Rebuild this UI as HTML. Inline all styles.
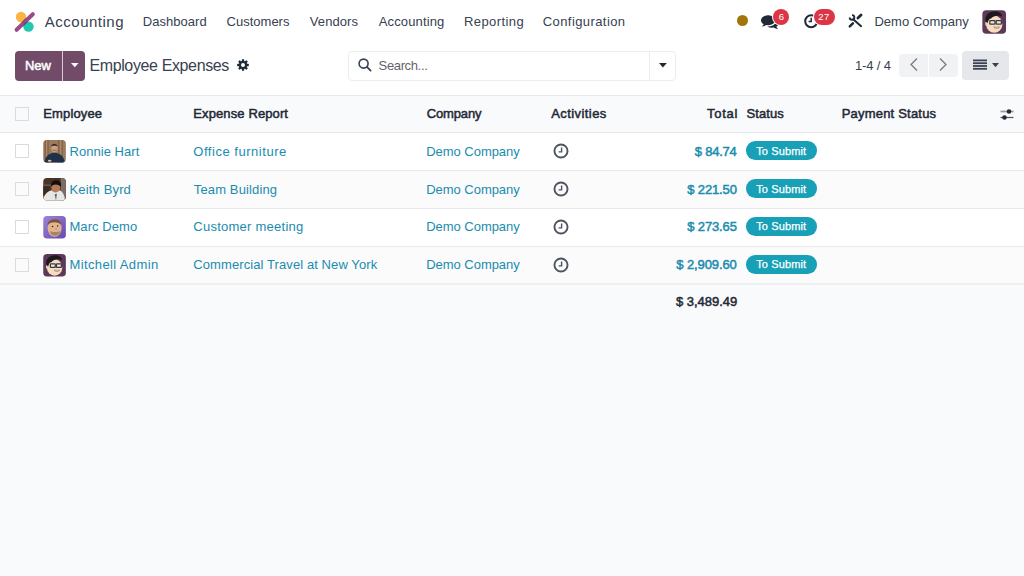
<!DOCTYPE html>
<html><head><meta charset="utf-8">
<style>
*{margin:0;padding:0;box-sizing:border-box}
html,body{width:1024px;height:576px;overflow:hidden;background:#fff;font-family:"Liberation Sans",sans-serif;color:#374151}
.a{position:absolute}
.t{position:absolute;white-space:nowrap}
svg{position:absolute;overflow:visible}
</style></head><body>
<svg style="left:14px;top:10px" width="22" height="22" viewBox="0 0 22 22">
  <circle cx="7" cy="7" r="5.2" fill="#fbb445"/>
  <circle cx="14.5" cy="16.6" r="5.2" fill="#21c8b0"/>
  <defs><clipPath id="lgo"><circle cx="7" cy="7" r="5.2"/></clipPath><clipPath id="lgt"><circle cx="14.5" cy="16.6" r="5.2"/></clipPath></defs>
  <line x1="2.6" y1="19.8" x2="18.8" y2="4.2" stroke="#9b4a86" stroke-width="4" stroke-linecap="round"/>
  <line x1="2.6" y1="19.8" x2="18.8" y2="4.2" stroke="#8a4a4a" stroke-width="4" clip-path="url(#lgo)"/>
  <line x1="2.6" y1="19.8" x2="18.8" y2="4.2" stroke="#3f4a7a" stroke-width="4" clip-path="url(#lgt)"/>
</svg>
<div class="a" style="left:737px;top:15px;width:11px;height:11px;border-radius:50%;background:#a3740a"></div>
<svg style="left:761px;top:14px" width="18" height="15" viewBox="0 128 1792 1536" preserveAspectRatio="none">
  <path fill="#1f2937" d="M1408 768q0 139-94 257t-256.5 186.5-353.5 68.5q-86 0-176-16-124 88-278 128-36 9-86 16h-3q-11 0-20.5-8t-11.5-21q-1-3-1-6.5t.5-6.5 2-6l2.5-5 3.5-5.5 4-5 4.5-5 4-4.5q5-6 23-25t26-29.5 22.5-29 25-38.5 20.5-44q-124-72-195-177t-71-224q0-139 94-257t256.5-186.5 353.5-68.5 353.5 68.5 256.5 186.5 94 257zm384 256q0 120-71 224.5t-195 176.5q10 24 20.5 44t25 38.5 22.5 29 26 29.5 23 25q1 1 4 4.5t4.5 5 4 5 3.5 5.5l2.5 5 2 6 .5 6.5-1 6.5q-3 14-13 22t-22 7q-50-7-86-16-154-40-278-128-90 16-176 16-271 0-472-132 58 4 88 4 161 0 309-45t264-129q125-92 192-212t67-254q0-77-23-152 129 71 204 178t75 230z"/>
</svg>
<div class="a" style="left:773px;top:9px;width:16px;height:16px;border-radius:8px;background:#dc3545;box-shadow:0 0 0 1px #fff"></div>
<svg style="left:804px;top:14px" width="15" height="15" viewBox="0 0 15 15">
  <circle cx="7.2" cy="7.2" r="6" fill="none" stroke="#1f2937" stroke-width="2"/>
  <path d="M7.2 3.8v3.6H4.6" fill="none" stroke="#1f2937" stroke-width="1.5"/>
</svg>
<div class="a" style="left:813.5px;top:9px;width:21px;height:16px;border-radius:8px;background:#dc3545;box-shadow:0 0 0 1px #fff"></div>
<svg style="left:845px;top:10px" width="22" height="21" viewBox="0 0 22 21">
  <path d="M8.2 9.3L16.1 16.2" stroke="#1f2937" stroke-width="2" stroke-linecap="round"/>
  <path d="M4.7 7.4A2.3 2.3 0 1 0 7 5.1" fill="none" stroke="#1f2937" stroke-width="1.9"/>
  <path d="M12.9 8L16 5.1" stroke="#1f2937" stroke-width="2.8" stroke-linecap="round"/>
  <path d="M4.8 16.3L7.9 13.3" stroke="#1f2937" stroke-width="2.5" stroke-linecap="round"/>
</svg>
<svg style="left:980px;top:7.5px" width="28.3" height="28.3" viewBox="0 0 576 576"><defs><clipPath id="cmitchell7_5"><rect x="48" y="45" width="482" height="478" rx="80"/></clipPath></defs><g clip-path="url(#cmitchell7_5)"><rect x="0" y="0" width="576" height="576" fill="#5d3858"/>
<ellipse cx="290" cy="330" rx="165" ry="175" fill="#f7dcc0"/>
<ellipse cx="135" cy="320" rx="30" ry="45" fill="#f0cfae"/>
<path d="M110 260c-20-230 330-250 340-80c-60-40-180-30-220 30l-40 20c-20 20-30 60-40 80z" fill="#1e1a1c"/>
<rect x="200" y="255" width="105" height="75" rx="10" fill="#e8e8e8" stroke="#3a3a3a" stroke-width="26"/>
<rect x="330" y="255" width="105" height="75" rx="10" fill="#e8e8e8" stroke="#3a3a3a" stroke-width="26"/>
<path d="M280 390c30 35 90 35 120 0z" fill="#ffffff" stroke="#8a5a50" stroke-width="12"/></g></svg>
<div class="a" style="left:15px;top:51px;width:70px;height:30px;border-radius:4px;background:#714b67"></div>
<div class="a" style="left:62px;top:51px;width:1px;height:30px;background:#d9c8d5"></div>
<svg style="left:70.5px;top:62.5px" width="8" height="5" viewBox="0 0 8 5"><path d="M0 0h7.5L3.75 4.2z" fill="#fff"/></svg>
<svg style="left:237px;top:59.2px" width="12" height="12" viewBox="0 0 12 12">
  <g fill="#1f2937"><circle cx="6" cy="6" r="4.1"/><rect x="4.85" y="0.2" width="2.3" height="3" rx="0.5" transform="rotate(0 6 6)"/><rect x="4.85" y="0.2" width="2.3" height="3" rx="0.5" transform="rotate(45 6 6)"/><rect x="4.85" y="0.2" width="2.3" height="3" rx="0.5" transform="rotate(90 6 6)"/><rect x="4.85" y="0.2" width="2.3" height="3" rx="0.5" transform="rotate(135 6 6)"/><rect x="4.85" y="0.2" width="2.3" height="3" rx="0.5" transform="rotate(180 6 6)"/><rect x="4.85" y="0.2" width="2.3" height="3" rx="0.5" transform="rotate(225 6 6)"/><rect x="4.85" y="0.2" width="2.3" height="3" rx="0.5" transform="rotate(270 6 6)"/><rect x="4.85" y="0.2" width="2.3" height="3" rx="0.5" transform="rotate(315 6 6)"/></g>
  <circle cx="6" cy="6" r="2.0" fill="#fff"/>
</svg>
<div class="a" style="left:347.7px;top:50.6px;width:328.3px;height:30px;border:1px solid #eaecef;border-radius:4px;background:#fff"></div>
<div class="a" style="left:649px;top:51px;width:1px;height:30px;background:#eaecef"></div>
<svg style="left:357.5px;top:58px" width="14" height="14" viewBox="0 0 14 14">
  <circle cx="5.6" cy="5.6" r="4.5" fill="none" stroke="#374151" stroke-width="1.6"/>
  <path d="M8.9 8.9L12.6 12.6" stroke="#374151" stroke-width="1.8" stroke-linecap="round"/>
</svg>
<svg style="left:658.5px;top:63px" width="8" height="5" viewBox="0 0 8 5"><path d="M0 0h7.8L3.9 4.6z" fill="#1f2937"/></svg>
<div class="a" style="left:899px;top:54px;width:59px;height:23px;border-radius:4px;background:#f1f2f4"></div>
<div class="a" style="left:928px;top:54px;width:1px;height:23px;background:#fff"></div>
<svg style="left:910px;top:58px" width="8" height="13" viewBox="0 0 8 13"><path d="M7 0.5L1 6.5l6 6" fill="none" stroke="#777a80" stroke-width="1.3"/></svg>
<svg style="left:939.3px;top:58px" width="8" height="13" viewBox="0 0 8 13"><path d="M1 0.5l6 6-6 6" fill="none" stroke="#777a80" stroke-width="1.3"/></svg>
<div class="a" style="left:962px;top:51px;width:47px;height:29px;border-radius:4px;background:#e6e7eb"></div>
<svg style="left:973px;top:59px" width="14" height="11" viewBox="0 0 14 11">
  <g fill="#374151"><rect x="0" y="0.5" width="14" height="1.8"/><rect x="0" y="3.3" width="14" height="1.8"/><rect x="0" y="6.1" width="14" height="1.8"/><rect x="0" y="8.9" width="14" height="1.8"/></g>
</svg>
<svg style="left:992px;top:62.5px" width="8" height="5" viewBox="0 0 8 5"><path d="M0 0h7L3.5 4.3z" fill="#374151"/></svg>
<div class="a" style="left:0;top:95px;width:1024px;height:481px;background:#f9fafb"></div>
<div class="a" style="left:0;top:95px;width:1024px;height:1px;background:#e7e9ed"></div>
<div class="a" style="left:0;top:132px;width:1024px;height:1px;background:#e7e9ed"></div>
<div class="a" style="left:0;top:133px;width:1024px;height:37px;background:#fff"></div>
<div class="a" style="left:0;top:170px;width:1024px;height:1px;background:#e7e9ed"></div>
<div class="a" style="left:0;top:171px;width:1024px;height:37px;background:#fbfbfc"></div>
<div class="a" style="left:0;top:208px;width:1024px;height:1px;background:#e7e9ed"></div>
<div class="a" style="left:0;top:209px;width:1024px;height:37px;background:#fff"></div>
<div class="a" style="left:0;top:246px;width:1024px;height:1px;background:#e7e9ed"></div>
<div class="a" style="left:0;top:247px;width:1024px;height:37px;background:#fbfbfc"></div>
<div class="a" style="left:15px;top:107px;width:13.5px;height:13.5px;border:1px solid #dadbdd;border-radius:0.5px;background:transparent"></div>
<svg style="left:1000px;top:108.8px" width="14" height="11" viewBox="0 0 14 11">
  <path d="M0.5 2.5h13" stroke="#9a9ca5" stroke-width="1.8"/><path d="M0.5 8.5h13" stroke="#4f5461" stroke-width="1.2"/>
  <circle cx="9" cy="2.5" r="2.3" fill="#1f2937"/>
  <circle cx="4.5" cy="8.5" r="2.3" fill="#1f2937"/>
</svg>
<div class="a" style="left:0;top:283px;width:1024px;height:1px;background:#edeef1"></div>
<div class="a" style="left:0;top:284px;width:1024px;height:1px;background:#f1f2f4"></div>
<div class="a" style="left:15px;top:144px;width:13.5px;height:13.5px;border:1px solid #dadbdd;border-radius:0.5px;background:transparent"></div>
<svg style="left:41px;top:138px" width="27" height="27" viewBox="0 0 576 576"><defs><clipPath id="cronnie138"><rect x="48" y="45" width="482" height="478" rx="80"/></clipPath></defs><g clip-path="url(#cronnie138)"><rect x="0" y="0" width="576" height="576" fill="#9c7a5c"/>
<path d="M90 0v576M150 0v576M380 0v576M450 0v576" stroke="#7b5b42" stroke-width="22"/>
<path d="M120 0v576M420 0v576" stroke="#b49274" stroke-width="18"/>
<ellipse cx="288" cy="215" rx="68" ry="92" fill="#c8a08a"/>
<path d="M215 190c-5-80 140-95 140 0c-20-30-120-30-140 0z" fill="#3d2c24"/>
<path d="M235 235c10 60 100 60 110 0c-10 25-100 25-110 0z" fill="#a86a5a"/>
<path d="M60 576c20-160 80-250 228-260c150 10 210 100 230 260z" fill="#1f3249"/>
<ellipse cx="185" cy="485" rx="40" ry="22" fill="#d8c0b0"/></g></svg>
<svg style="left:552.8px;top:142.5px" width="16" height="16" viewBox="0 0 16 16"><circle cx="8" cy="8" r="6.55" fill="none" stroke="#4f5461" stroke-width="1.9"/><path d="M8.6 4.6v4.3H5.6" fill="none" stroke="#4f5461" stroke-width="1.4"/></svg>
<div class="a" style="left:746px;top:141px;width:70.5px;height:18.5px;border-radius:9.25px;background:#17a0b6"></div>
<div class="a" style="left:15px;top:182px;width:13.5px;height:13.5px;border:1px solid #dadbdd;border-radius:0.5px;background:transparent"></div>
<svg style="left:41px;top:176px" width="27" height="27" viewBox="0 0 576 576"><defs><clipPath id="ckeith176"><rect x="48" y="45" width="482" height="478" rx="80"/></clipPath></defs><g clip-path="url(#ckeith176)"><rect x="0" y="0" width="576" height="576" fill="#4b3425"/>
<rect x="0" y="180" width="576" height="30" fill="#6b5a50"/>
<rect x="420" y="0" width="156" height="576" fill="#7a6e66"/>
<rect x="40" y="220" width="140" height="200" fill="#3a2a20"/>
<ellipse cx="315" cy="240" rx="95" ry="125" fill="#b77a58"/>
<path d="M215 200c-10-130 200-150 215-20l-10 60c-20-70-170-80-195-10z" fill="#151010"/>
<path d="M40 576c0-150 80-240 190-270c40 60 120 60 165 0c70 30 120 110 120 270z" fill="#e6e6e4"/>
<path d="M290 390l30 130 20-140z" fill="#5a6a70"/></g></svg>
<svg style="left:552.8px;top:180.5px" width="16" height="16" viewBox="0 0 16 16"><circle cx="8" cy="8" r="6.55" fill="none" stroke="#4f5461" stroke-width="1.9"/><path d="M8.6 4.6v4.3H5.6" fill="none" stroke="#4f5461" stroke-width="1.4"/></svg>
<div class="a" style="left:746px;top:179px;width:70.5px;height:18.5px;border-radius:9.25px;background:#17a0b6"></div>
<div class="a" style="left:15px;top:220px;width:13.5px;height:13.5px;border:1px solid #dadbdd;border-radius:0.5px;background:transparent"></div>
<svg style="left:41px;top:214px" width="27" height="27" viewBox="0 0 576 576"><defs><clipPath id="cmarc214"><rect x="48" y="45" width="482" height="478" rx="80"/></clipPath></defs><g clip-path="url(#cmarc214)"><defs><linearGradient id="gm214" x1="0" y1="0" x2="1" y2="1"><stop offset="0" stop-color="#a08ae0"/><stop offset="1" stop-color="#5e44a8"/></linearGradient></defs>
<rect x="0" y="0" width="576" height="576" fill="url(#gm214)"/>
<ellipse cx="290" cy="300" rx="150" ry="185" fill="#e2b48e"/>
<path d="M140 250c-20-170 300-190 290-10c-30-80-260-90-290 10z" fill="#7a5238"/>
<path d="M190 360c20 140 200 140 220 0c-50 30-170 30-220 0z" fill="#a5846a"/>
<circle cx="245" cy="265" r="16" fill="#2a1e18"/>
<circle cx="355" cy="258" r="16" fill="#2a1e18"/>
<ellipse cx="320" cy="320" rx="22" ry="14" fill="#c98a70"/></g></svg>
<svg style="left:552.8px;top:218.5px" width="16" height="16" viewBox="0 0 16 16"><circle cx="8" cy="8" r="6.55" fill="none" stroke="#4f5461" stroke-width="1.9"/><path d="M8.6 4.6v4.3H5.6" fill="none" stroke="#4f5461" stroke-width="1.4"/></svg>
<div class="a" style="left:746px;top:217px;width:70.5px;height:18.5px;border-radius:9.25px;background:#17a0b6"></div>
<div class="a" style="left:15px;top:258px;width:13.5px;height:13.5px;border:1px solid #dadbdd;border-radius:0.5px;background:transparent"></div>
<svg style="left:41px;top:252px" width="27" height="27" viewBox="0 0 576 576"><defs><clipPath id="cmitchell252"><rect x="48" y="45" width="482" height="478" rx="80"/></clipPath></defs><g clip-path="url(#cmitchell252)"><rect x="0" y="0" width="576" height="576" fill="#5d3858"/>
<ellipse cx="290" cy="330" rx="165" ry="175" fill="#f7dcc0"/>
<ellipse cx="135" cy="320" rx="30" ry="45" fill="#f0cfae"/>
<path d="M110 260c-20-230 330-250 340-80c-60-40-180-30-220 30l-40 20c-20 20-30 60-40 80z" fill="#1e1a1c"/>
<rect x="200" y="255" width="105" height="75" rx="10" fill="#e8e8e8" stroke="#3a3a3a" stroke-width="26"/>
<rect x="330" y="255" width="105" height="75" rx="10" fill="#e8e8e8" stroke="#3a3a3a" stroke-width="26"/>
<path d="M280 390c30 35 90 35 120 0z" fill="#ffffff" stroke="#8a5a50" stroke-width="12"/></g></svg>
<svg style="left:552.8px;top:256.5px" width="16" height="16" viewBox="0 0 16 16"><circle cx="8" cy="8" r="6.55" fill="none" stroke="#4f5461" stroke-width="1.9"/><path d="M8.6 4.6v4.3H5.6" fill="none" stroke="#4f5461" stroke-width="1.4"/></svg>
<div class="a" style="left:746px;top:255px;width:70.5px;height:18.5px;border-radius:9.25px;background:#17a0b6"></div>
<div class="t" style="left:44.85px;top:14.00px;font-size:15px;line-height:15px;color:#374151;letter-spacing:0.49px">Accounting</div>
<div class="t" style="left:142.85px;top:15.00px;font-size:13px;line-height:13px;color:#374151;letter-spacing:0.03px">Dashboard</div>
<div class="t" style="left:226.60px;top:15.00px;font-size:13px;line-height:13px;color:#374151">Customers</div>
<div class="t" style="left:309.80px;top:15.00px;font-size:13px;line-height:13px;color:#374151;letter-spacing:0.08px">Vendors</div>
<div class="t" style="left:378.75px;top:15.00px;font-size:13px;line-height:13px;color:#374151;letter-spacing:0.13px">Accounting</div>
<div class="t" style="left:464.05px;top:15.00px;font-size:13px;line-height:13px;color:#374151;letter-spacing:0.40px">Reporting</div>
<div class="t" style="left:542.80px;top:15.00px;font-size:13px;line-height:13px;color:#374151;letter-spacing:0.41px">Configuration</div>
<div class="t" style="left:874.45px;top:15.00px;font-size:13px;line-height:13px;color:#374151;letter-spacing:0.03px">Demo Company</div>
<div class="t" style="left:25.00px;top:59.00px;font-size:13px;line-height:13px;color:#fff;-webkit-text-stroke:0.5px #fff;letter-spacing:-0.05px">New</div>
<div class="t" style="left:89.40px;top:58.00px;font-size:16px;line-height:16px;color:#374151;letter-spacing:-0.37px">Employee Expenses</div>
<div class="t" style="left:378.60px;top:59.00px;font-size:13px;line-height:13px;color:#5f636f;letter-spacing:-0.36px">Search...</div>
<div class="t" style="left:855.05px;top:59.00px;font-size:13px;line-height:13px;color:#374151;letter-spacing:-0.17px">1-4 / 4</div>
<div class="t" style="left:43.30px;top:107.00px;font-size:13px;line-height:13px;color:#1f2937;-webkit-text-stroke:0.5px #1f2937;letter-spacing:0.14px">Employee</div>
<div class="t" style="left:193.30px;top:107.00px;font-size:13px;line-height:13px;color:#1f2937;-webkit-text-stroke:0.5px #1f2937;letter-spacing:0.11px">Expense Report</div>
<div class="t" style="left:426.75px;top:107.00px;font-size:13px;line-height:13px;color:#1f2937;-webkit-text-stroke:0.5px #1f2937;letter-spacing:-0.14px">Company</div>
<div class="t" style="left:551.20px;top:107.00px;font-size:13px;line-height:13px;color:#1f2937;-webkit-text-stroke:0.5px #1f2937;letter-spacing:0.43px">Activities</div>
<div class="t" style="left:707.05px;top:107.00px;font-size:13px;line-height:13px;color:#1f2937;-webkit-text-stroke:0.5px #1f2937;letter-spacing:0.71px">Total</div>
<div class="t" style="left:746.60px;top:107.00px;font-size:13px;line-height:13px;color:#1f2937;-webkit-text-stroke:0.5px #1f2937;letter-spacing:0.08px">Status</div>
<div class="t" style="left:841.70px;top:107.00px;font-size:13px;line-height:13px;color:#1f2937;-webkit-text-stroke:0.5px #1f2937;letter-spacing:0.20px">Payment Status</div>
<div class="t" style="left:69.45px;top:145.00px;font-size:13px;line-height:13px;color:#1a8cae;letter-spacing:0.05px">Ronnie Hart</div>
<div class="t" style="left:193.30px;top:145.00px;font-size:13px;line-height:13px;color:#1a8cae;letter-spacing:0.53px">Office furniture</div>
<div class="t" style="left:426.25px;top:145.00px;font-size:13px;line-height:13px;color:#1a8cae;letter-spacing:-0.04px">Demo Company</div>
<div class="t" style="left:694.75px;top:145.00px;font-size:13px;line-height:13px;color:#1a8cae;-webkit-text-stroke:0.5px #1a8cae;letter-spacing:-0.23px">$ 84.74</div>
<div class="t" style="left:756.25px;top:146.00px;font-size:11px;line-height:11px;color:#fff;-webkit-text-stroke:0.25px #fff;letter-spacing:0.11px">To Submit</div>
<div class="t" style="left:69.45px;top:183.00px;font-size:13px;line-height:13px;color:#1a8cae;letter-spacing:0.16px">Keith Byrd</div>
<div class="t" style="left:193.80px;top:183.00px;font-size:13px;line-height:13px;color:#1a8cae;letter-spacing:0.13px">Team Building</div>
<div class="t" style="left:426.25px;top:183.00px;font-size:13px;line-height:13px;color:#1a8cae;letter-spacing:-0.04px">Demo Company</div>
<div class="t" style="left:687.15px;top:183.00px;font-size:13px;line-height:13px;color:#1a8cae;-webkit-text-stroke:0.5px #1a8cae;letter-spacing:-0.11px">$ 221.50</div>
<div class="t" style="left:756.25px;top:184.00px;font-size:11px;line-height:11px;color:#fff;-webkit-text-stroke:0.25px #fff;letter-spacing:0.11px">To Submit</div>
<div class="t" style="left:69.45px;top:220.00px;font-size:13px;line-height:13px;color:#1a8cae;letter-spacing:0.08px">Marc Demo</div>
<div class="t" style="left:193.30px;top:220.00px;font-size:13px;line-height:13px;color:#1a8cae;letter-spacing:0.25px">Customer meeting</div>
<div class="t" style="left:426.25px;top:220.00px;font-size:13px;line-height:13px;color:#1a8cae;letter-spacing:-0.04px">Demo Company</div>
<div class="t" style="left:687.15px;top:220.00px;font-size:13px;line-height:13px;color:#1a8cae;-webkit-text-stroke:0.5px #1a8cae;letter-spacing:-0.11px">$ 273.65</div>
<div class="t" style="left:756.25px;top:221.00px;font-size:11px;line-height:11px;color:#fff;-webkit-text-stroke:0.25px #fff;letter-spacing:0.11px">To Submit</div>
<div class="t" style="left:69.45px;top:258.00px;font-size:13px;line-height:13px;color:#1a8cae;letter-spacing:0.38px">Mitchell Admin</div>
<div class="t" style="left:193.30px;top:258.00px;font-size:13px;line-height:13px;color:#1a8cae;letter-spacing:0.09px">Commercial Travel at New York</div>
<div class="t" style="left:426.25px;top:258.00px;font-size:13px;line-height:13px;color:#1a8cae;letter-spacing:-0.04px">Demo Company</div>
<div class="t" style="left:676.35px;top:258.00px;font-size:13px;line-height:13px;color:#1a8cae;-webkit-text-stroke:0.5px #1a8cae;letter-spacing:-0.11px">$ 2,909.60</div>
<div class="t" style="left:756.25px;top:259.00px;font-size:11px;line-height:11px;color:#fff;-webkit-text-stroke:0.25px #fff;letter-spacing:0.11px">To Submit</div>
<div class="t" style="left:676.05px;top:295.00px;font-size:13px;line-height:13px;color:#1f2937;-webkit-text-stroke:0.5px #1f2937;letter-spacing:-0.04px">$ 3,489.49</div>
<div class="t" style="left:778.85px;top:12.00px;font-size:9.5px;line-height:9.5px;color:#fff">6</div>
<div class="t" style="left:818.35px;top:12.00px;font-size:9.5px;line-height:9.5px;color:#fff;letter-spacing:0.25px">27</div>
</body></html>
